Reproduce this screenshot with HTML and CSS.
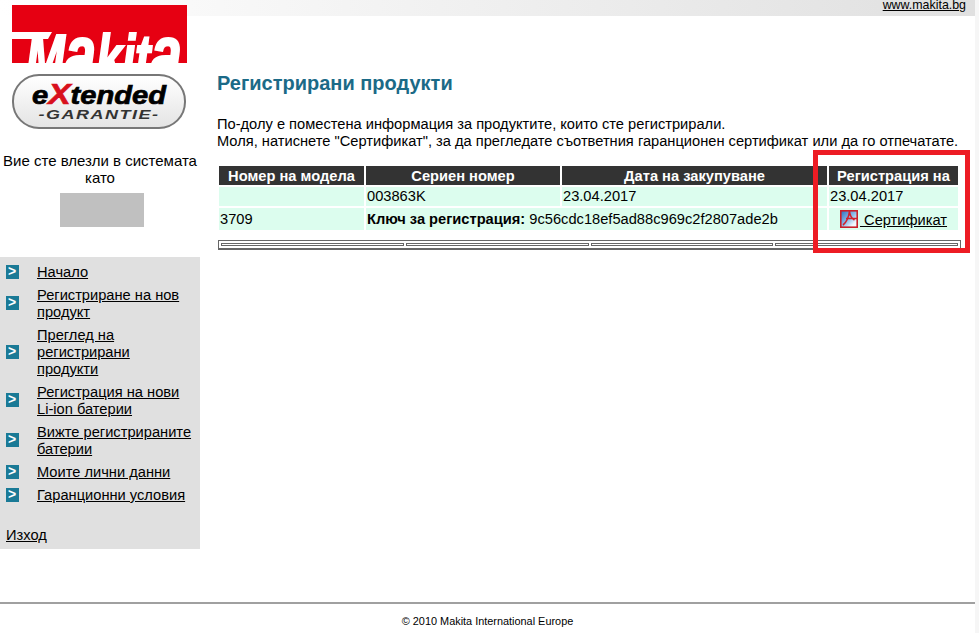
FILE: index.html

```html
<!DOCTYPE html>
<html lang="bg">
<head>
    <meta charset="UTF-8" />
    <meta name="viewport" content="width=device-width, initial-scale=1" />
    <title>Регистрирани продукти</title>
    <link rel="stylesheet" href="styles.css">
</head>
<body>

<div class="page">
    <div class="top-bar"><a href="#">www.makita.bg</a></div>

    <div class="main">
        <div class="sidebar">
            <div class="logo">
                <svg width="175" height="58" viewBox="0 0 175 58">
                    <rect width="175" height="58" fill="#e60012"/>
                    <path d="M0 27H40L36 34H0z" fill="#fff"/>
                    <text class="logo-text" x="14" y="76" textLength="156" lengthAdjust="spacingAndGlyphs">M<tspan class="logo-big">a</tspan>kit<tspan class="logo-big">a</tspan></text>
                </svg>
            </div>
            <div class="badge">
                <div class="badge-top">e<span class="badge-x">X</span>tended</div>
                <div class="badge-sub">-GARANTIE-</div>
            </div>
            <div class="login-info">Вие сте влезли в системата като</div>
            <div class="user-box"></div>

            <div class="menu">
                <div class="menu-item"><i class="arrow"></i><a href="#">Начало</a></div>
                <div class="menu-item"><i class="arrow"></i><a href="#">Регистриране на нов продукт</a></div>
                <div class="menu-item"><i class="arrow"></i><a href="#">Преглед на регистрирани продукти</a></div>
                <div class="menu-item"><i class="arrow"></i><a href="#">Регистрация на нови Li-ion батерии</a></div>
                <div class="menu-item"><i class="arrow"></i><a href="#">Вижте регистрираните батерии</a></div>
                <div class="menu-item"><i class="arrow"></i><a href="#">Моите лични данни</a></div>
                <div class="menu-item"><i class="arrow"></i><a href="#">Гаранционни условия</a></div>
                <a class="logout" href="#">Изход</a>
            </div>
        </div>

        <div class="content">
            <h1>Регистрирани продукти</h1>
            <p class="intro">По-долу е поместена информация за продуктите, които сте регистрирали.<br>Моля, натиснете "Сертификат", за да прегледате съответния гаранционен сертификат или да го отпечатате.</p>

            <table class="products">
                <tr>
                    <th class="col-model">Номер на модела</th>
                    <th class="col-serial">Сериен номер</th>
                    <th class="col-date">Дата на закупуване</th>
                    <th class="col-reg">Регистрация на</th>
                </tr>
                <tr>
                    <td></td>
                    <td>003863K</td>
                    <td>23.04.2017</td>
                    <td>23.04.2017</td>
                </tr>
                <tr class="row-key">
                    <td>3709</td>
                    <td colspan="2"><b>Ключ за регистрация:</b> 9c56cdc18ef5ad88c969c2f2807ade2b</td>
                    <td class="cert-cell">
                        <a href="#"><svg class="pdf-icon" width="18" height="18" viewBox="0 0 18 18">
                                <defs>
                                    <linearGradient id="pdfBg" x1="0" y1="0" x2="1" y2="1">
                                        <stop offset="0" stop-color="#2a6fc0"/>
                                        <stop offset="0.5" stop-color="#8dbde9"/>
                                        <stop offset="0.8" stop-color="#f2f8fd"/>
                                    </linearGradient>
                                </defs>
                                <rect x="0.8" y="0.8" width="16.400" height="16.400" fill="url(#pdfBg)" stroke="#c8202a" stroke-width="1.600"/>
                                <path d="M3 15C6 13 9 7 9.500 1M9.500 1c0 4 2 7 5 9M6 8.500h12" fill="none" stroke="#d0222c" stroke-width="1.600"/>
                            </svg>&nbsp;Сертификат</a>
                    </td>
                </tr>
            </table>

            <table class="pager">
                <tr><td></td><td></td><td></td><td></td></tr>
            </table>
        </div>
    </div>

    <div class="footer">© 2010 Makita International Europe</div>

    <!-- червената рамка върху колоната -->
    <div class="highlight"></div>
</div>

</body>
</html>
```

FILE: styles.css

```css
html, body {
    margin: 0;
    padding: 0;
    background: #fff;
}
body {
    font-family: "Liberation Sans", Arial, sans-serif;
    font-size: 14.67px;
    color: #000;
}
a {
    color: #000;
}
.page {
    position: relative;
    box-sizing: border-box;
    width: 979px;
    height: 633px;
    overflow: hidden;
    border-right: 4px solid #f6f6f6;
}
.top-bar {
    height: 16px;
    box-sizing: border-box;
    padding-right: 9px;
    text-align: right;
    font-size: 12.4px;
    line-height: 10px;
    background: linear-gradient(to right, #fff, #e0e0e0);
}
.main {
    display: flex;
    height: 586px;
}
.sidebar {
    width: 200px;
    flex: none;
}
.logo {
    height: 58px;
    margin: -11px 0 0 12px;
    position: relative;
}
.logo svg {
    display: block;
    overflow: hidden;
}
.logo-text {
    font-family: "Liberation Sans", sans-serif;
    font-size: 66px;
    font-weight: 700;
    font-style: italic;
    fill: #fff;
    stroke: #fff;
    stroke-width: 2px;
}
.logo-big {
    font-size: 80px;
}
.badge {
    box-sizing: border-box;
    width: 174px;
    height: 55px;
    margin: 11px 0 0 12px;
    padding-top: 6px;
    border: 2px solid #777;
    border-radius: 27px;
    background: linear-gradient(to bottom, #fff, #e4e4e4);
    text-align: center;
}
.badge-top {
    font-size: 26px;
    font-weight: 700;
    font-style: italic;
    line-height: 24px;
    transform: scaleX(1.12);
    -webkit-text-stroke: 0.7px #000;
}
.badge-x {
    color: #d8101c;
    -webkit-text-stroke: 0.7px #d8101c;
    font-size: 30px;
}
.badge-sub {
    font-size: 12px;
    font-weight: 700;
    font-style: italic;
    line-height: 12px;
    margin-top: 2px;
    letter-spacing: 1px;
    transform: scaleX(1.5);
    color: #333;
}
.login-info {
    margin-top: 23px;
    text-align: center;
    font-size: 15px;
    line-height: 17px;
}
.user-box {
    width: 84px;
    height: 34px;
    margin: 7px 0 0 60px;
    background: #c0c0c0;
}
.menu {
    margin-top: 30px;
    height: 292px;
    box-sizing: border-box;
    padding-top: 7px;
    background: #e0e0e0;
}
.menu-item {
    display: flex;
    align-items: center;
    padding: 0 8px 6px 6px;
    line-height: 17px;
}
.menu-item a {
    display: block;
}
.arrow {
    flex: none;
    width: 13px;
    height: 14px;
    margin-right: 18px;
    background: #1a7a96;
    position: relative;
    top: -1px;
}
.arrow::before {
    content: ">";
    position: absolute;
    left: 2px;
    top: -1px;
    font: 700 14px/15px "Liberation Sans", sans-serif;
    color: #fff;
}
.logout {
    display: block;
    margin: 17px 0 0 6px;
    line-height: 17px;
}
.content {
    padding-left: 17px;
    flex: 1;
}
h1 {
    margin: 56px 0 0;
    font-size: 20px;
    line-height: 23px;
    font-weight: 700;
    color: #1b6a87;
}
.intro {
    margin: 21px 0 0;
    line-height: 17px;
    white-space: nowrap;
}
.products {
    border-collapse: separate;
    border-spacing: 2px;
    margin: 14px 0 0;
    width: 743px;
    table-layout: fixed;
}
.products th {
    background: #333;
    color: #fff;
    height: 19px;
    padding: 0;
    font-size: 14.67px;
    text-align: center;
}
.products td {
    background: #dcfdee;
    height: 19px;
    padding: 0 0 0 1px;
    line-height: 17px;
}
.products .row-key td {
    height: 22px;
}
.col-model { width: 145px; }
.col-serial { width: 194px; }
.col-date { width: 265px; }
.products .cert-cell {
    padding: 0;
    text-align: center;
}
.pdf-icon {
    vertical-align: -3px;
    margin-right: 2px;
}
.pager {
    border-collapse: separate;
    border-spacing: 2px;
    border: 1px solid #666;
    border-bottom-width: 2px;
    margin: 8px 0 0 1px;
    width: 743px;
    height: 10px;
    box-sizing: border-box;
    table-layout: fixed;
}
.pager td {
    border: 1px solid #666;
    height: 1px;
    padding: 0;
}
.footer {
    box-sizing: border-box;
    border-top: 2px solid #a0a0a0;
    padding-top: 11px;
    text-align: center;
    font-size: 10.9px;
    line-height: 12px;
}
.highlight {
    position: absolute;
    left: 813px;
    top: 150px;
    width: 147px;
    height: 93px;
    border: 5px solid #ed1c24;
}
```
